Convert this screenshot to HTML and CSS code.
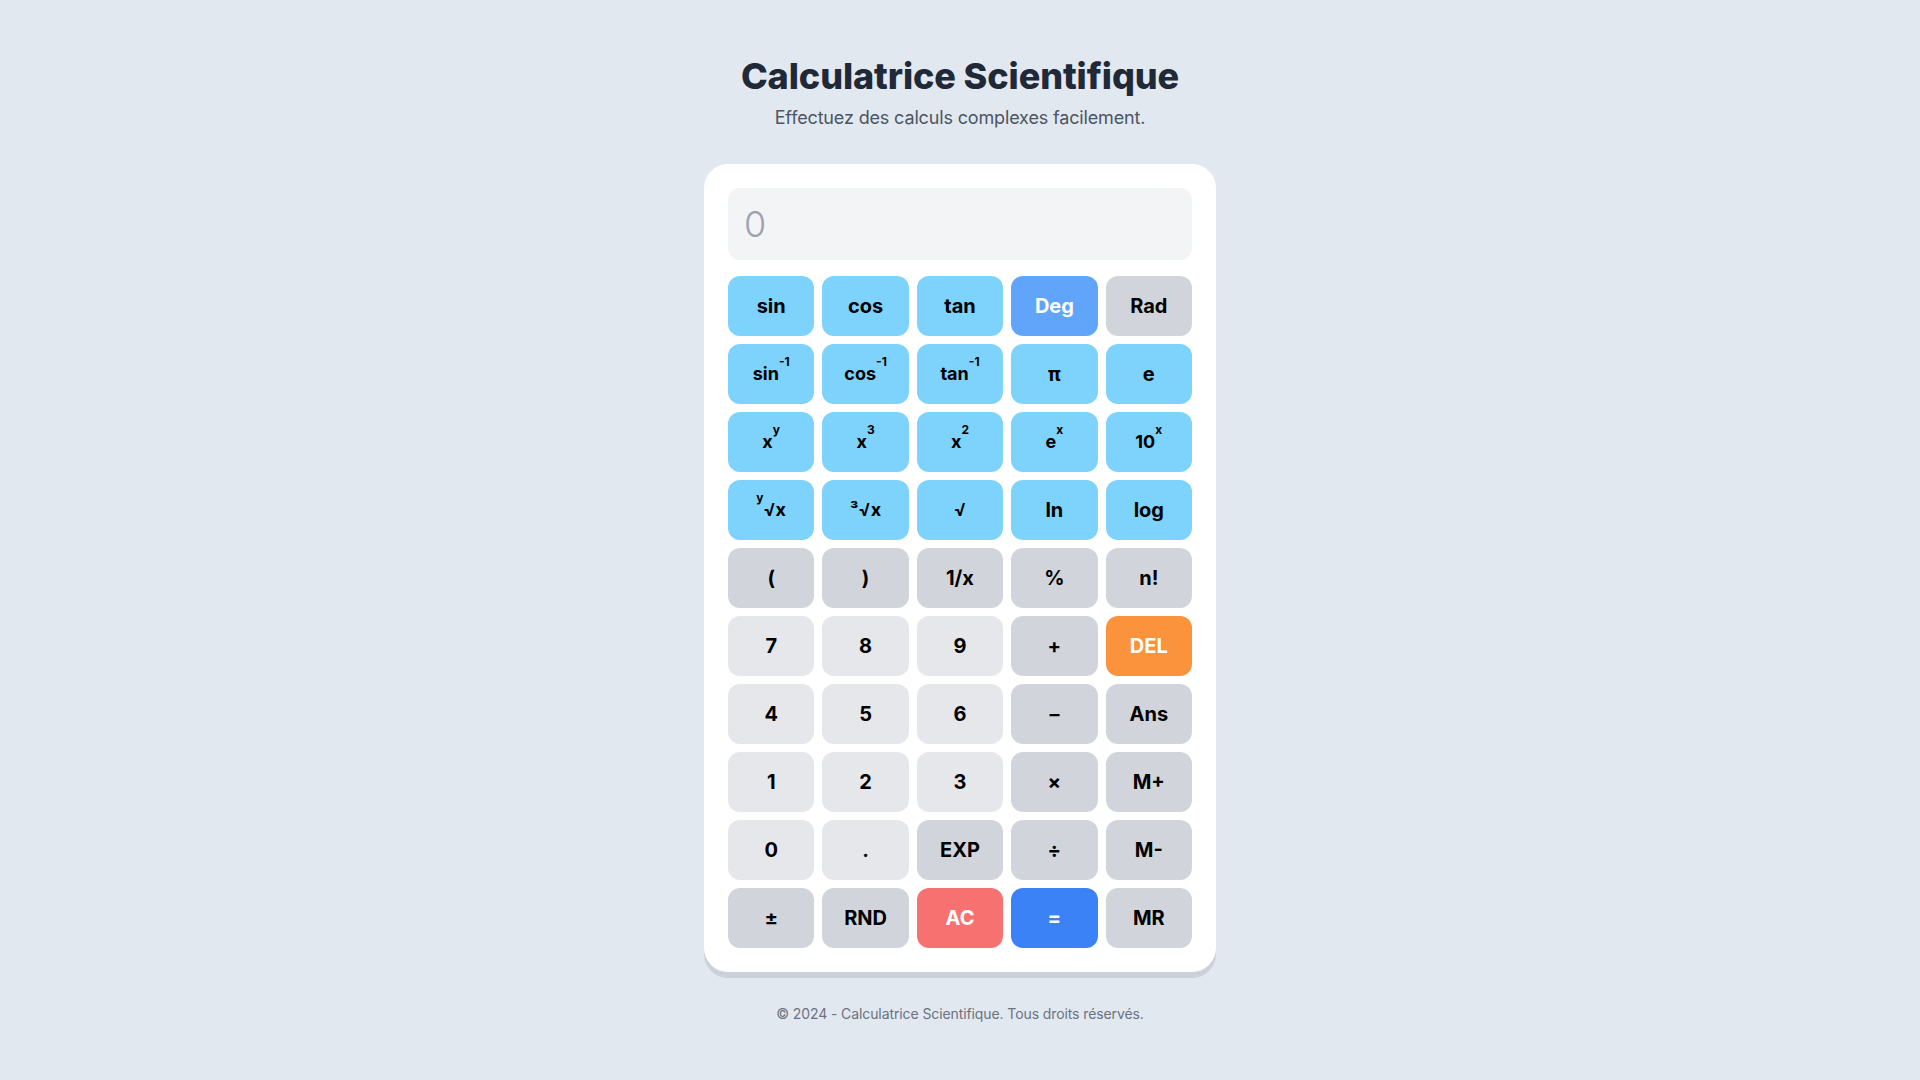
FILE: index.html
```html
<!DOCTYPE html>
<html lang="fr">
<head>
<meta charset="utf-8">
<title>Calculatrice Scientifique</title>
<link rel="stylesheet" href="styles.css">
</head>
<body>
<main class="page">
  <header class="header">
    <h1 class="title">Calculatrice Scientifique</h1>
    <p class="subtitle">Effectuez des calculs complexes facilement.</p>
  </header>
  <section class="card">
    <div class="display">0</div>
    <div class="keys">
      <button class="key fn">sin</button>
      <button class="key fn">cos</button>
      <button class="key fn">tan</button>
      <button class="key mode-on">Deg</button>
      <button class="key op">Rad</button>

      <button class="key fn small">sin<sup class="sup">-1</sup></button>
      <button class="key fn small">cos<sup class="sup">-1</sup></button>
      <button class="key fn small">tan<sup class="sup">-1</sup></button>
      <button class="key fn">π</button>
      <button class="key fn">e</button>

      <button class="key fn small">x<sup class="sup">y</sup></button>
      <button class="key fn small">x<sup class="sup">3</sup></button>
      <button class="key fn small">x<sup class="sup">2</sup></button>
      <button class="key fn small">e<sup class="sup">x</sup></button>
      <button class="key fn small">10<sup class="sup">x</sup></button>

      <button class="key fn small"><sup class="sup">y</sup>√x</button>
      <button class="key fn small">³√x</button>
      <button class="key fn small">√</button>
      <button class="key fn">ln</button>
      <button class="key fn">log</button>

      <button class="key op">(</button>
      <button class="key op">)</button>
      <button class="key op">1/x</button>
      <button class="key op">%</button>
      <button class="key op">n!</button>

      <button class="key num">7</button>
      <button class="key num">8</button>
      <button class="key num">9</button>
      <button class="key op">+</button>
      <button class="key del">DEL</button>

      <button class="key num">4</button>
      <button class="key num">5</button>
      <button class="key num">6</button>
      <button class="key op">–</button>
      <button class="key op">Ans</button>

      <button class="key num">1</button>
      <button class="key num">2</button>
      <button class="key num">3</button>
      <button class="key op">×</button>
      <button class="key op">M+</button>

      <button class="key num">0</button>
      <button class="key num">.</button>
      <button class="key op">EXP</button>
      <button class="key op">÷</button>
      <button class="key op">M-</button>

      <button class="key op">±</button>
      <button class="key op">RND</button>
      <button class="key clear">AC</button>
      <button class="key equals">=</button>
      <button class="key op">MR</button>
    </div>
  </section>
  <footer class="footer">© 2024 - Calculatrice Scientifique. Tous droits réservés.</footer>
</main>
</body>
</html>
```

FILE: styles.css
```css
* {
  box-sizing: border-box;
}

html, body {
  margin: 0;
  padding: 0;
}

body {
  background: #e2e8f0;
  font-family: Inter, "Noto Sans", "Liberation Sans", sans-serif;
  color: #1f2937;
}

.page {
  min-height: 100vh;
  display: flex;
  flex-direction: column;
  align-items: center;
  justify-content: center;
}

.header {
  text-align: center;
  margin-bottom: 32px;
}

.title {
  margin: 0 0 8px;
  font-size: 36px;
  line-height: 40px;
  font-weight: 800;
  color: #1f2937;
  letter-spacing: -0.1px;
}

.subtitle {
  margin: 0;
  font-size: 18px;
  line-height: 28px;
  color: #4b5563;
  letter-spacing: -0.15px;
}

.card {
  width: 512px;
  background: #ffffff;
  border-radius: 24px;
  padding: 24px;
  box-shadow: 0 6px 0 #cbd0d9;
}

.display {
  height: 72px;
  background: #f3f4f6;
  border-radius: 12px;
  padding: 16px;
  font-size: 36px;
  line-height: 40px;
  font-weight: 300;
  color: #9ca3af;
  margin-bottom: 16px;
}

.keys {
  display: grid;
  grid-template-columns: repeat(5, 1fr);
  gap: 8px;
}

.key {
  height: 60px;
  border: none;
  border-radius: 12px;
  font-family: Inter, "Noto Sans", "Liberation Sans", sans-serif;
  font-size: 20px;
  line-height: 28px;
  font-weight: 700;
  color: #000000;
  padding: 0;
  cursor: pointer;
}

.small {
  font-size: 18px;
}

.sup {
  font-size: 12px;
  line-height: 0;
  vertical-align: 14px;
}

.fn {
  background: #7dd3fc;
}

.op {
  background: #d1d5db;
}

.num {
  background: #e5e7eb;
}

.mode-on {
  background: #60a5fa;
  color: #ffffff;
}

.del {
  background: #fb923c;
  color: #ffffff;
}

.clear {
  background: #f87171;
  color: #ffffff;
}

.equals {
  background: #3b82f6;
  color: #ffffff;
}

.footer {
  margin-top: 32px;
  font-size: 14px;
  line-height: 20px;
  color: #6b7280;
  letter-spacing: -0.1px;
}
```
